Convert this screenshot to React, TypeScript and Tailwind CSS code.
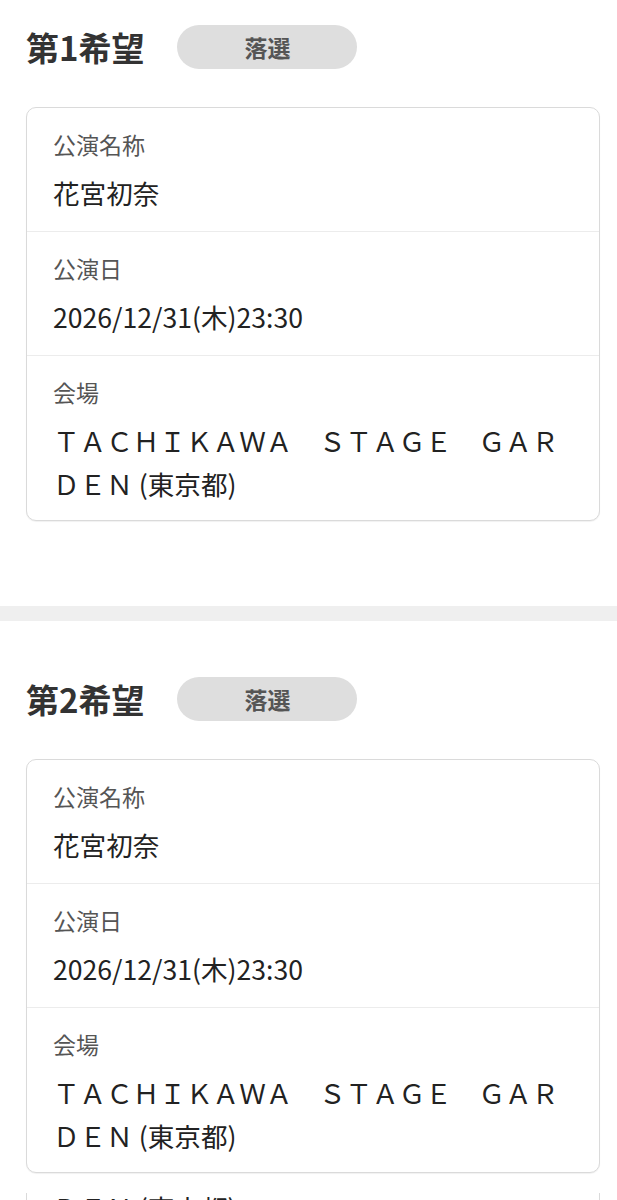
import React from "react";

const FONT = {
  fontFamily: '"Noto Sans CJK JP", "Noto Sans", sans-serif',
};

type Field = { label: string; value: string };

const fields: Field[] = [
  { label: "公演名称", value: "花宮初奈" },
  { label: "公演日", value: "2026/12/31(木)23:30" },
  {
    label: "会場",
    value: "ＴＡＣＨＩＫＡＷＡ　ＳＴＡＧＥ　ＧＡＲＤＥＮ (東京都)",
  },
];

function Row({ field, last }: { field: Field; last: boolean }) {
  return (
    <div
      className={`px-[26px] pt-[18px] ${
        last ? "pb-[15px]" : "pb-[17px] border-b border-[#ececec]"
      }`}
    >
      <div className="text-[23px] leading-[36px] text-[#555555]">
        {field.label}
      </div>
      <div className="mt-[9px] text-[26.6px] leading-[43px] text-[#222222] break-all">
        {field.value}
      </div>
    </div>
  );
}

function Choice({ rank }: { rank: number }) {
  return (
    <section>
      <div className="flex items-center pl-[26px] h-[44px]">
        <h2 className="text-[33px] font-bold text-[#333333] leading-none">
          第{rank}希望
        </h2>
        <span className="ml-[33px] flex items-center justify-center w-[180px] h-[44px] rounded-full bg-[#dedede] text-[23px] font-bold text-[#555555]">
          落選
        </span>
      </div>
      <div className="ml-[26px] mr-[17px] mt-[38px] rounded-[10px] border border-[#dadada] bg-white shadow-[0_1px_1px_rgba(0,0,0,0.06)]">
        {fields.map((f, i) => (
          <Row key={f.label} field={f} last={i === fields.length - 1} />
        ))}
      </div>
    </section>
  );
}

export default function App() {
  return (
    <div className="min-h-screen bg-white pt-[25px]" style={FONT}>
      <Choice rank={1} />
      <div className="mt-[85px] h-[15px] bg-[#efefef]" />
      <div className="pt-[56px]">
        <Choice rank={2} />
      </div>
      <div className="ml-[26px] mr-[17px] mt-[20px] h-[40px] overflow-hidden border-x border-[#dadada]">
        <div className="-mt-[7px] px-[26px] text-[26.6px] leading-[43px] text-[#222222]">
          ＤＥＮ (東京都)
        </div>
      </div>
    </div>
  );
}
